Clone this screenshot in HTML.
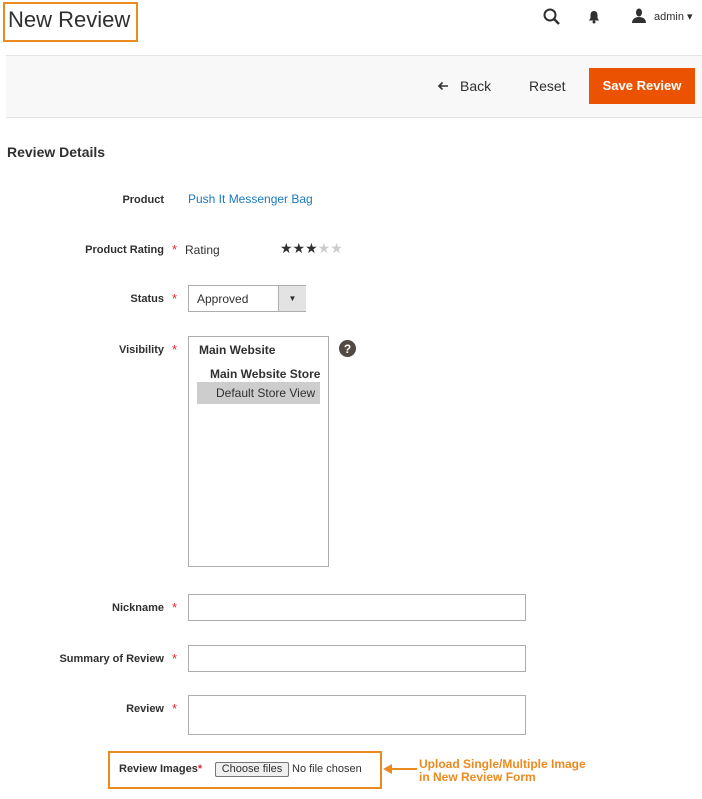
<!DOCTYPE html>
<html><head><meta charset="utf-8"><style>
*{box-sizing:border-box;margin:0;padding:0}
body{width:702px;height:799px;background:#fff;font-family:"Liberation Sans","DejaVu Sans",sans-serif;color:#303030;position:relative;overflow:hidden}
.a{position:absolute}
.lbl{position:absolute;right:538px;font-size:11px;font-weight:bold;color:#303030;text-align:right;white-space:nowrap}
.star{position:absolute;left:172px;color:#e22626;font-size:13px}
.inp{position:absolute;border:1px solid #adadad;background:#fff}
</style></head><body>
<div class="a" style="left:3px;top:2px;width:135px;height:40px;border:2px solid #eb8a1e"></div>
<div class="a" style="left:8px;top:7px;font-size:22px;color:#303030">New Review</div>
<svg class="a" style="left:543px;top:8px" width="18" height="18" viewBox="0 0 18 18"><circle cx="7" cy="7" r="5.5" fill="none" stroke="#303030" stroke-width="2"/><path d="M11 11l5 5" stroke="#303030" stroke-width="2.4"/></svg>
<svg class="a" style="left:588px;top:10px" width="12" height="14" viewBox="0 0 12 14"><path d="M6 1c-2.5 0-3.5 2-3.5 4v3L1 10.5h10L9.5 8V5C9.5 3 8.5 1 6 1z" fill="#303030"/><circle cx="6" cy="12" r="1.5" fill="#303030"/></svg>
<svg class="a" style="left:631px;top:8px" width="16" height="16" viewBox="0 0 16 16"><ellipse cx="8" cy="4.5" rx="3" ry="4" fill="#303030"/><path d="M1 15c0-4 3-6 7-6s7 2 7 6z" fill="#303030"/></svg>
<div class="a" style="left:654px;top:10px;font-size:11px;color:#303030">admin ▾</div>
<div class="a" style="left:6px;top:55px;width:696px;height:63px;background:#f8f8f8;border-top:1px solid #e3e3e3;border-bottom:1px solid #e3e3e3"></div>
<svg class="a" style="left:437px;top:81px" width="12" height="10" viewBox="0 0 12 10"><path d="M11 5H2M5.5 1.5L2 5l3.5 3.5" fill="none" stroke="#303030" stroke-width="1.6"/></svg>
<div class="a" style="left:460px;top:78px;font-size:14px;color:#303030">Back</div>
<div class="a" style="left:529px;top:78px;font-size:14px;color:#303030">Reset</div>
<div class="a" style="left:589px;top:68px;width:106px;height:36px;background:#eb5202;color:#fff;font-size:13px;font-weight:bold;text-align:center;line-height:36px">Save Review</div>
<div class="a" style="left:7px;top:144px;font-size:14px;font-weight:bold;color:#303030">Review Details</div>
<div class="lbl" style="top:194px">Product</div>
<div class="a" style="left:188px;top:192px;font-size:12px;color:#1979c3">Push It Messenger Bag</div>
<div class="lbl" style="top:244px">Product Rating</div><div class="star" style="top:242px">*</div>
<div class="a" style="left:185px;top:243px;font-size:12px">Rating</div>
<div class="a" style="left:280px;top:240px;font-size:14px;letter-spacing:0px"><span style="color:#303030">★★★</span><span style="color:#ccc">★★</span></div>
<div class="lbl" style="top:293px">Status</div><div class="star" style="top:291px">*</div>
<div class="inp" style="left:188px;top:285px;width:118px;height:27px"><span class="a" style="left:8px;top:6px;font-size:12px">Approved</span><span class="a" style="left:89px;top:0;width:28px;height:25px;background:#e3e3e3;border-left:1px solid #adadad;text-align:center;font-size:8px;line-height:25px">▼</span></div>
<div class="lbl" style="top:344px">Visibility</div><div class="star" style="top:342px">*</div>
<div class="inp" style="left:188px;top:336px;width:141px;height:231px">
<div class="a" style="left:10px;top:6px;font-size:12px;font-weight:bold">Main Website</div>
<div class="a" style="left:21px;top:30px;font-size:12px;font-weight:bold">Main Website Store</div>
<div class="a" style="left:8px;top:45px;width:123px;height:22px;background:#cdcdcd;font-size:12px;line-height:22px;padding-left:19px">Default Store View</div></div>
<svg class="a" style="left:339px;top:340px" width="17" height="17" viewBox="0 0 17 17"><circle cx="8.5" cy="8.5" r="8.5" fill="#514943"/><text x="8.5" y="13" text-anchor="middle" font-size="12" font-weight="bold" fill="#fff" font-family="Liberation Sans">?</text></svg>
<div class="lbl" style="top:602px">Nickname</div><div class="star" style="top:600px">*</div>
<div class="inp" style="left:188px;top:594px;width:338px;height:27px"></div>
<div class="lbl" style="top:653px">Summary of Review</div><div class="star" style="top:651px">*</div>
<div class="inp" style="left:188px;top:645px;width:338px;height:27px"></div>
<div class="lbl" style="top:703px">Review</div><div class="star" style="top:701px">*</div>
<div class="inp" style="left:188px;top:695px;width:338px;height:40px"></div>
<div class="a" style="left:108px;top:751px;width:274px;height:38px;border:2px solid #eb8a1e"></div>
<div class="a" style="left:119px;top:763px;font-size:11px;font-weight:bold;color:#303030">Review Images<span style="color:#e22626">*</span></div>
<div class="a" style="left:215px;top:762px;width:74px;height:15px;border:1px solid #767676;background:#efefef;font-size:11px;text-align:center;line-height:13px;border-radius:2px">Choose files</div>
<div class="a" style="left:292px;top:763px;font-size:11px;color:#303030">No file chosen</div>
<svg class="a" style="left:383px;top:764px" width="34" height="10" viewBox="0 0 34 10"><path d="M0 5L9 0v10z" fill="#eb8a1e"/><path d="M8 5h26" stroke="#eb8a1e" stroke-width="2"/></svg>
<div class="a" style="left:419px;top:758px;font-size:12px;font-weight:bold;color:#eb8a1e;line-height:13px">Upload Single/Multiple Image<br>in New Review Form</div>
</body></html>
